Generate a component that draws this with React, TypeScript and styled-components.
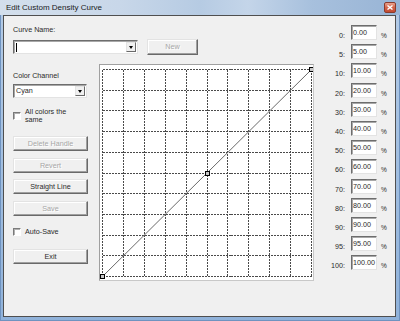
import React from "react";
import styled, { createGlobalStyle } from "styled-components";

const GlobalStyle = createGlobalStyle`
  html, body {
    margin: 0;
    padding: 0;
    background: #ffffff;
  }
  body {
    font-family: "Liberation Sans", Arial, sans-serif;
    font-size: 7.2px;
    color: #2a2a2a;
  }
  * {
    box-sizing: border-box;
  }
`;

const Window = styled.div`
  width: 400px;
  height: 321px;
  display: flex;
  flex-direction: column;
  background: linear-gradient(180deg, #b4cbe6 0%, #90b2da 100%);
  box-shadow: inset 0 0 0 1px #6f93c0;
`;

const TitleBar = styled.div`
  height: 15px;
  display: flex;
  align-items: center;
  justify-content: space-between;
  padding: 0 4px 0 6px;
  background: linear-gradient(
    90deg,
    #d3dfec 0%,
    #c8d7e9 30%,
    #b6cbe3 50%,
    #c4d5e9 62%,
    #a7c0dd 78%,
    #98b4d5 100%
  );
`;

const Title = styled.span`
  font-size: 8px;
  color: #1a1a1a;
`;

const CloseButton = styled.span`
  width: 12px;
  height: 11px;
  display: flex;
  align-items: center;
  justify-content: center;
  border: 1px solid #8a3b2c;
  border-radius: 2px;
  background: linear-gradient(180deg, #e9a38f 0%, #d4644a 50%, #c24a31 100%);
`;

const Client = styled.div`
  flex: 1;
  margin: 0 4px 4px 3px;
  border: 1px solid #4f4f4f;
  background: #f0f0f0;
  display: flex;
  padding: 9px 0 0 9px;
`;

const Main = styled.div`
  width: 301px;
  display: flex;
  flex-direction: column;
`;

const Label = styled.div<{ $top?: number }>`
  line-height: 10px;
  margin-top: ${(p) => p.$top ?? 0}px;
  white-space: nowrap;
`;

const CurveRow = styled.div`
  margin-top: 4px;
  height: 16px;
  display: flex;
  align-items: center;
`;

const Combo = styled.div<{ $width: number; $top?: number }>`
  width: ${(p) => p.$width}px;
  height: 14px;
  margin-top: ${(p) => p.$top ?? 0}px;
  display: flex;
  background: #fff;
  border: 1px solid;
  border-color: #6d6d6d #e3e3e3 #e3e3e3 #6d6d6d;
  box-shadow: inset 1px 1px 0 #a8a8a8;
`;

const ComboText = styled.div`
  flex: 1;
  display: flex;
  align-items: center;
  padding-left: 2px;
  line-height: 10px;
`;

const Caret = styled.span`
  width: 1px;
  height: 9px;
  background: #000;
`;

const ComboArrow = styled.div`
  width: 10px;
  margin: 1px;
  display: flex;
  align-items: center;
  justify-content: center;
  background: #f0f0f0;
  border: 1px solid;
  border-color: #e3e3e3 #696969 #696969 #e3e3e3;

  &::after {
    content: "";
    border-left: 2.5px solid transparent;
    border-right: 2.5px solid transparent;
    border-top: 3px solid #000;
  }
`;

const Button = styled.button<{ $width?: number; $height?: number; $top?: number; $left?: number }>`
  width: ${(p) => p.$width ?? 75}px;
  height: ${(p) => p.$height ?? 15}px;
  margin: ${(p) => p.$top ?? 0}px 0 0 ${(p) => p.$left ?? 0}px;
  padding: 0;
  font: inherit;
  color: #2a2a2a;
  background: #f0f0f0;
  border: 1px solid;
  border-color: #e3e3e3 #696969 #696969 #e3e3e3;
  box-shadow: inset -1px -1px 0 #a0a0a0, inset 1px 1px 0 #ffffff;
  line-height: 10px;
  flex-shrink: 0;

  &:disabled {
    color: #a6a6a6;
    text-shadow: 1px 1px 0 #ffffff;
  }
`;

const Body = styled.div`
  margin-top: 9px;
  display: flex;
`;

const LeftPanel = styled.div`
  width: 75px;
  display: flex;
  flex-direction: column;
`;

const CheckRow = styled.div<{ $top: number }>`
  margin-top: ${(p) => p.$top}px;
  display: flex;
  gap: 4px;
`;

const CheckBox = styled.span<{ $top: number }>`
  width: 8px;
  height: 8px;
  margin-top: ${(p) => p.$top}px;
  flex-shrink: 0;
  background: #fff;
  border: 1px solid;
  border-color: #7a7a7a #ffffff #ffffff #7a7a7a;
  box-shadow: inset 1px 1px 0 #b0b0b0;
`;

const CheckText = styled.span<{ $lh: number }>`
  max-width: 45px;
  line-height: ${(p) => p.$lh}px;
`;

const Graph = styled.div`
  width: 215px;
  height: 217px;
  margin-left: 11px;
  background: #fff;
  border: 1px solid;
  border-color: #a0a0a0 #c8c8c8 #c8c8c8 #a0a0a0;
  display: flex;
`;

const RightPanel = styled.div`
  display: flex;
  flex-direction: column;
  gap: 4.2px;
`;

const ValueRow = styled.div`
  height: 15px;
  display: grid;
  grid-template-columns: 31px 26px auto;
  column-gap: 6px;
  align-items: end;
`;

const ValueLabel = styled.span`
  text-align: right;
  line-height: 9px;
`;

const ValueInput = styled.input`
  width: 26px;
  height: 15px;
  padding: 0 0 0 1px;
  font: inherit;
  color: #2a2a2a;
  background: #fff;
  border: 1px solid;
  border-color: #6d6d6d #e3e3e3 #e3e3e3 #6d6d6d;
  box-shadow: inset 1px 1px 0 #a8a8a8;
  outline: none;
`;

const Percent = styled.span`
  line-height: 9px;
  margin-left: -2px;
  font-size: 6.5px;
`;

const VALUES = [0, 5, 10, 20, 30, 40, 50, 60, 70, 80, 90, 95, 100];

const GW = 213;
const GH = 215;
const X0 = 2;
const X1 = 211;
const Y0 = 4;
const Y1 = 211;

const CurveChart = () => {
  const xs = Array.from({ length: 11 }, (_, i) => Math.round(X0 + (i * (X1 - X0)) / 10) + 0.5);
  const ys = Array.from({ length: 11 }, (_, i) => Math.round(Y0 + (i * (Y1 - Y0)) / 10) + 0.5);
  const handles = [
    [xs[0], ys[10]],
    [xs[5], ys[5]],
    [xs[10], ys[0]],
  ];
  return (
    <svg width={GW} height={GH} viewBox={`0 0 ${GW} ${GH}`}>
      <g stroke="#4a4a4a" strokeWidth={1} strokeDasharray="2 1" shapeRendering="crispEdges">
        {xs.map((x) => (
          <line key={`v${x}`} x1={x} y1={ys[0]} x2={x} y2={ys[10]} />
        ))}
        {ys.map((y) => (
          <line key={`h${y}`} x1={xs[0]} y1={y} x2={xs[10]} y2={y} />
        ))}
      </g>
      <line x1={xs[0]} y1={ys[10]} x2={xs[10]} y2={ys[0]} stroke="#6a6a6a" strokeWidth={1} />
      {handles.map(([x, y]) => (
        <rect
          key={`${x}-${y}`}
          x={x - 2}
          y={y - 2}
          width={4}
          height={4}
          fill="#c8c8c8"
          stroke="#000"
          strokeWidth={1}
          shapeRendering="crispEdges"
        />
      ))}
    </svg>
  );
};

const App = () => (
  <>
    <GlobalStyle />
    <Window>
      <TitleBar>
        <Title>Edit Custom Density Curve</Title>
        <CloseButton>
          <svg width="6" height="5" viewBox="0 0 6 5">
            <path d="M0.5 0.5 L5.5 4.5 M5.5 0.5 L0.5 4.5" stroke="#fff" strokeWidth="1.4" />
          </svg>
        </CloseButton>
      </TitleBar>
      <Client>
        <Main>
          <Label>Curve Name:</Label>
          <CurveRow>
            <Combo $width={125}>
              <ComboText>
                <Caret />
              </ComboText>
              <ComboArrow />
            </Combo>
            <Button disabled $width={51} $height={16} $left={9}>
              New
            </Button>
          </CurveRow>
          <Body>
            <LeftPanel>
              <Label $top={7}>Color Channel</Label>
              <Combo $width={74} $top={3}>
                <ComboText>Cyan</ComboText>
                <ComboArrow />
              </Combo>
              <CheckRow $top={10}>
                <CheckBox $top={4} />
                <CheckText $lh={8}>All colors the same</CheckText>
              </CheckRow>
              <Button disabled $top={12}>
                Delete Handle
              </Button>
              <Button disabled $top={7}>
                Revert
              </Button>
              <Button $top={6}>Straight Line</Button>
              <Button disabled $top={7}>
                Save
              </Button>
              <CheckRow $top={11}>
                <CheckBox $top={1} />
                <CheckText $lh={9}>Auto-Save</CheckText>
              </CheckRow>
              <Button $top={13}>Exit</Button>
            </LeftPanel>
            <Graph>
              <CurveChart />
            </Graph>
          </Body>
        </Main>
        <RightPanel>
          {VALUES.map((v) => (
            <ValueRow key={v}>
              <ValueLabel>{v}:</ValueLabel>
              <ValueInput readOnly value={v.toFixed(2)} />
              <Percent>%</Percent>
            </ValueRow>
          ))}
        </RightPanel>
      </Client>
    </Window>
  </>
);

export default App;
